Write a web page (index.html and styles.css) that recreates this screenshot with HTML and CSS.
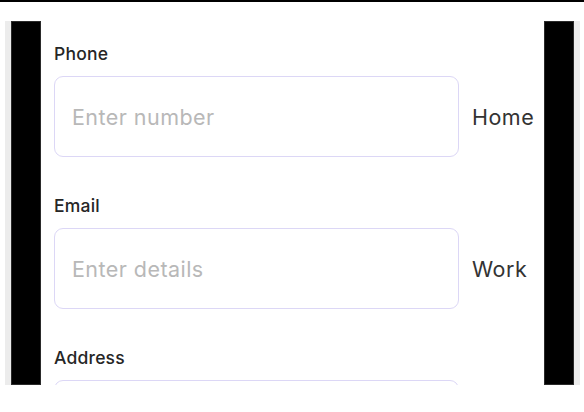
FILE: index.html
```html
<!DOCTYPE html>
<html lang="en">
<head>
<meta charset="utf-8">
<title>Contact form</title>
<link rel="stylesheet" href="styles.css">
</head>
<body>
<div class="topline"></div>
<div class="device">
  <div class="rim"></div>
  <div class="bezel"></div>
  <div class="screen">
    <div class="field">
      <div class="label">Phone</div>
      <div class="row">
        <input class="box" type="text" placeholder="Enter number">
        <span class="side">Home</span>
      </div>
    </div>
    <div class="field">
      <div class="label">Email</div>
      <div class="row">
        <input class="box" type="text" placeholder="Enter details">
        <span class="side">Work</span>
      </div>
    </div>
    <div class="field">
      <div class="label">Address</div>
      <div class="row">
        <input class="box" type="text" placeholder="">
      </div>
    </div>
  </div>
  <div class="bezel"></div>
  <div class="rim"></div>
</div>
</body>
</html>
```
FILE: styles.css
```css
* { box-sizing: border-box; }
html, body { margin: 0; padding: 0; background: #ffffff; }
body {
  width: 584px;
  height: 412px;
  overflow: hidden;
  font-family: Inter, "Noto Sans", sans-serif;
}
.topline { height: 2px; background: #000; }
.device {
  margin-top: 19px;
  margin-left: 5px;
  width: 575px;
  height: 364px;
  display: flex;
}
.rim { width: 6px; background: #ececec; }
.bezel { width: 30px; background: #000; border: 1px solid #2a2a2a; }
.screen {
  flex: 1;
  background: #fff;
  overflow: hidden;
  padding: 21px 0 0 13px;
}
.field { margin-bottom: 37px; }
.label {
  font-size: 17.5px;
  line-height: 24px;
  font-weight: 500;
  letter-spacing: 0.2px;
  color: #262626;
  margin-bottom: 10px;
}
.row { display: flex; align-items: center; }
.box {
  width: 405px;
  height: 81px;
  border: 1.5px solid #dcd7f6;
  border-radius: 9px;
  padding: 0 17px;
  font-family: inherit;
  font-size: 21.5px;
  letter-spacing: 0.45px;
  color: #333;
  background: #fff;
  outline: none;
  flex: none;
}
.box::placeholder { color: #b8b8b8; }
.side {
  margin-left: 13px;
  font-size: 21.5px;
  letter-spacing: 0.5px;
  color: #333;
}
```
